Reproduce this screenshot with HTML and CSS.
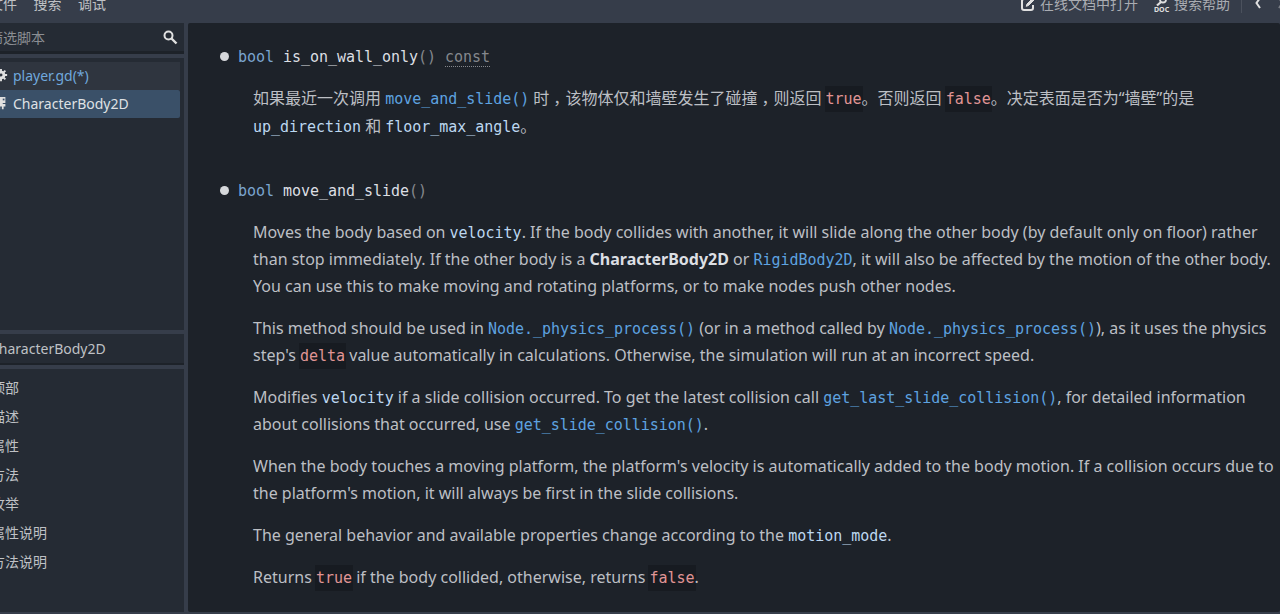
FILE: index.html
```html
<!DOCTYPE html>
<html lang="zh-CN">
<head>
    <meta charset="UTF-8">
    <title>Godot - Script Editor Help</title>
    <link rel="stylesheet" href="styles.css">
</head>
<body>
    <div class="app">
        <!-- Top bar -->
        <div class="topbar">
            <div class="menu">
                <span>文件</span>
                <span>搜索</span>
                <span>调试</span>
            </div>
            <div class="tools">
                <span class="tool">
                    <svg class="icon" viewBox="0 0 16 16"><path d="M7.500 3H4a2 2 0 0 0-2 2v7a2 2 0 0 0 2 2h7a2 2 0 0 0 2-2V9" fill="none" stroke="#e0e0e0" stroke-width="2"/><path d="M13.500 1.500 7 8l-.8 2.300L8.500 9.500 15 3z" fill="#e0e0e0" stroke="#e0e0e0"/></svg>
                    在线文档中打开
                </span>
                <span class="tool">
                    <svg class="icon" viewBox="0 0 16 16"><circle cx="9" cy="3.500" r="3" fill="none" stroke="#e0e0e0" stroke-width="1.800"/><path d="M7 6 3 9.500" stroke="#e0e0e0" stroke-width="2.200"/><text x="0" y="15.500" class="doc-label">DOC</text></svg>
                    搜索帮助
                </span>
                <span class="divider"></span>
                <svg class="chevron" viewBox="0 0 8 12"><path d="M6 1 2.500 6 6 11" fill="none" stroke="#e0e0e0" stroke-width="2"/></svg>
                <svg class="chevron dim" viewBox="0 0 8 12"><path d="M2 1l3.500 5L2 11" fill="none" stroke="#e0e0e0" stroke-width="2"/></svg>
            </div>
        </div>

        <div class="main">
            <!-- Left column -->
            <div class="sidebar">
                <div class="search-box">
                    <span>筛选脚本</span>
                    <svg class="search-icon" viewBox="0 0 16 16"><circle cx="6.500" cy="6.500" r="4" fill="none" stroke="#e0e0e0" stroke-width="2"/><path d="m9.500 9.500 5 5" stroke="#e0e0e0" stroke-width="2.400"/></svg>
                </div>
                <div class="script-panel">
                    <div class="script-item">
                        <svg class="item-icon" viewBox="0 0 16 16"><circle cx="8" cy="8" r="3.500" fill="none" stroke="#e0e0e0" stroke-width="3"/><path d="M8 1v14M1 8h14M3 3l10 10M13 3 3 13" stroke="#e0e0e0" stroke-width="2.200"/><circle cx="8" cy="8" r="1.700" fill="#2f353f"/></svg>
                        <span class="modified">player.gd(*)</span>
                    </div>
                    <div class="script-item selected">
                        <svg class="item-icon" viewBox="0 0 16 16"><path d="M3 1h10v7H10v1h3v3h-2v3H9v-3H7v3H5v-3H3V9h3V8H3z" fill="#e0e0e0"/><path d="M10 3h2v2h-2z" fill="#3a5068"/></svg>
                        <span>CharacterBody2D</span>
                    </div>
                </div>
                <div class="name-box">CharacterBody2D</div>
                <div class="outline-panel">
                    <div class="outline-item">顶部</div>
                    <div class="outline-item">描述</div>
                    <div class="outline-item">属性</div>
                    <div class="outline-item">方法</div>
                    <div class="outline-item">枚举</div>
                    <div class="outline-item">属性说明</div>
                    <div class="outline-item">方法说明</div>
                </div>
            </div>

            <!-- Class reference -->
            <div class="doc">
                <div class="method">
                    <span class="type">bool</span> <span class="name">is_on_wall_only</span><span class="muted">()</span> <span class="qualifier">const</span>
                </div>
                <p class="cjk">如果最近一次调用 <code class="link">move_and_slide()</code> 时<span class="comma">，</span>该物体仅和墙壁发生了碰撞<span class="comma">，</span>则返回 <code class="lit">true</code>。否则返回 <code class="lit">false</code>。决定表面是否为“墙壁”的是<br><code class="member">up_direction</code> 和 <code class="member">floor_max_angle</code>。</p>

                <div class="method second">
                    <span class="type">bool</span> <span class="name">move_and_slide</span><span class="muted">()</span>
                </div>
                <p>Moves the body based on <code class="member">velocity</code>. If the body collides with another, it will slide along the other body (by default only on floor) rather<br>than stop immediately. If the other body is a <b>CharacterBody2D</b> or <code class="link">RigidBody2D</code>, it will also be affected by the motion of the other body.<br>You can use this to make moving and rotating platforms, or to make nodes push other nodes.</p>
                <p>This method should be used in <code class="link">Node._physics_process()</code> (or in a method called by <code class="link">Node._physics_process()</code>), as it uses the physics<br>step's <code class="lit">delta</code> value automatically in calculations. Otherwise, the simulation will run at an incorrect speed.</p>
                <p>Modifies <code class="member">velocity</code> if a slide collision occurred. To get the latest collision call <code class="link">get_last_slide_collision()</code>, for detailed information<br>about collisions that occurred, use <code class="link">get_slide_collision()</code>.</p>
                <p>When the body touches a moving platform, the platform's velocity is automatically added to the body motion. If a collision occurs due to<br>the platform's motion, it will always be first in the slide collisions.</p>
                <p>The general behavior and available properties change according to the <code class="member">motion_mode</code>.</p>
                <p>Returns <code class="lit">true</code> if the body collided, otherwise, returns <code class="lit">false</code>.</p>
            </div>
        </div>
    </div>
</body>
</html>
```

FILE: styles.css
```css
/* General Styles */
html, body {
    margin: 0;
    padding: 0;
    height: 100%;
    overflow: hidden;
    background-color: #363d4a;
}
body {
    font-family: "Noto Sans", "Noto Sans CJK SC", sans-serif;
    font-size: 14px;
    color: #c4c6ca;
}

/* The window is cut off at the top and on the left */
.app {
    margin: -10px 0 0 -14px;
    width: 1294px;
    height: 624px;
    display: flex;
    flex-direction: column;
}

/* Top bar */
.topbar {
    height: 33px;
    flex: none;
    display: flex;
    justify-content: space-between;
}
.menu {
    display: flex;
    gap: 16.500px;
    padding: 4px 0 0 3px;
    line-height: 20px;
    color: #bfc1c5;
}
.tools {
    display: flex;
    align-items: flex-start;
    padding-top: 4px;
    margin-right: -5px;
    line-height: 20px;
    color: #a9acb2;
}
.tool {
    display: flex;
    align-items: flex-start;
    gap: 4px;
    margin-right: 16px;
}
.tool + .tool {
    margin-right: 11px;
}
.icon {
    width: 16px;
    height: 16px;
    margin-top: 2px;
}
.doc-label {
    font-size: 7px;
    font-weight: 700;
    fill: #e0e0e0;
}
.divider {
    width: 1px;
    height: 19px;
    background-color: #4b515d;
    margin-right: 12px;
}
.chevron {
    width: 8px;
    height: 12px;
    flex: none;
    margin: 3px 15px 0 0;
}
.chevron.dim {
    opacity: 0.4;
    margin-right: 0;
}

/* Main area */
.main {
    flex: 1;
    display: flex;
    gap: 4px;
    min-height: 0;
    padding-bottom: 2px;
}

/* Left column */
.sidebar {
    width: 198px;
    flex: none;
    display: flex;
    flex-direction: column;
}
.search-box {
    height: 31px;
    box-sizing: border-box;
    flex: none;
    display: flex;
    justify-content: space-between;
    align-items: center;
    padding: 0 6px 1px 3px;
    background-color: #252b34;
    border-bottom: 3px solid #1d2229;
    color: #8b8e93;
}
.search-icon {
    width: 16px;
    height: 16px;
    margin-top: 1px;
}
.script-panel {
    height: 272px;
    box-sizing: border-box;
    flex: none;
    margin-top: 4px;
    padding: 4px 4px 0 0;
    background-color: #252b34;
}
.script-item {
    height: 28px;
    box-sizing: border-box;
    display: flex;
    align-items: center;
    gap: 5px;
    padding: 0 0 2px 8px;
    background-color: #2f353f;
    color: #6fa8dc;
}
.script-item.selected {
    background-color: #3a5068;
    color: #dfe1e4;
    border-radius: 0 2px 2px 0;
}
.item-icon {
    width: 14px;
    height: 14px;
}
.name-box {
    height: 31px;
    box-sizing: border-box;
    flex: none;
    margin-top: 4px;
    padding-left: 4px;
    line-height: 30px;
    background-color: #252b34;
    border-bottom: 2px solid #1d2229;
    color: #bfc1c5;
}
.outline-panel {
    flex: 1;
    margin-top: 4px;
    padding: 4px 0 0 5px;
    background-color: #252b34;
}
.outline-item {
    height: 29px;
    line-height: 29px;
    color: #bfc1c5;
}

/* Class reference */
.doc {
    flex: 1;
    min-width: 0;
    box-sizing: border-box;
    padding: 21px 0 0 50px;
    background-color: #1d2229;
    border-radius: 2px;
    font-size: 16px;
    color: #bcbfc4;
    white-space: nowrap;
}
.doc p {
    margin: 0 0 15px 15px;
    line-height: 27px;
}
.doc p.cjk {
    line-height: 28px;
    margin-top: -1px;
}
/* the full-width comma sits in the middle of its cell here */
.comma {
    font-feature-settings: "halt";
    padding: 0 4px;
}
.method {
    position: relative;
    font-family: "DejaVu Sans Mono", monospace;
    font-size: 15px;
    letter-spacing: -0.03px;
    line-height: 27px;
    margin-bottom: 14px;
}
.method::before {
    content: "";
    position: absolute;
    left: -18px;
    top: 8px;
    width: 9px;
    height: 9px;
    border-radius: 50%;
    background-color: #d6d8db;
}
.method.second {
    margin-top: 38px;
}
.type {
    color: #7aa5cf;
}
.name {
    color: #dcdfe3;
}
.muted {
    color: #85888d;
}
.qualifier {
    color: #85888d;
    border-bottom: 1px dotted #85888d;
}
code {
    font-family: "DejaVu Sans Mono", monospace;
    font-size: 15px;
    letter-spacing: -0.03px;
    line-height: 1;
}
.link {
    color: #5ea3e0;
}
.member {
    color: #bcd7f0;
}
.lit {
    color: #e09595;
    background-color: #171b21;
    margin: 0 -1px;
    padding: 4px 1px;
}
b {
    color: #dcdfe3;
}
```
